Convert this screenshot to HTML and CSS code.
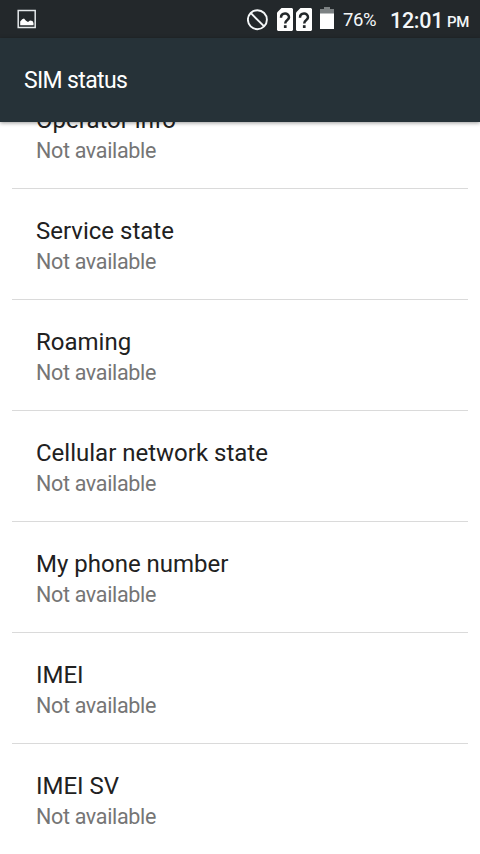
FILE: index.html
```html
<!DOCTYPE html>
<html lang="en">
<head>
<meta charset="utf-8">
<title>SIM status</title>
<link rel="stylesheet" href="styles.css">
</head>
<body>
<div class="statusbar">
  <svg class="picture" width="20" height="20" viewBox="0 0 20 20"><rect x="1.200" y="1.500" width="17" height="17" fill="none" stroke="#e4e8ea" stroke-width="1.5"/><path d="M3.200 16.300V12.500L5.200 10.200L7 9.600L9 11.800L11 13L13 11.500L15.500 12L16.500 14V16.300Z" fill="#fff"/></svg>
  <svg class="blocked" width="22" height="22" viewBox="0 0 22 22" fill="none" stroke="#f4f7f8" stroke-width="1.9"><circle cx="10.400" cy="10.700" r="9.500"/><path d="M3.900 4.200L16.900 17.200"/></svg>
  <svg class="sim" width="16" height="23" viewBox="0 0 16 23"><path d="M4.500 0H15L16 1V22L15 23H1L0 22V4.500Z" fill="#fff"/><path d="M4 9.800C4 4.300 12 4.300 12 9.300C12 12.200 8.200 11.700 8.200 15.500" fill="none" stroke="#23282b" stroke-width="2.500"/><rect x="6.900" y="17.200" width="2.700" height="2.800" fill="#23282b"/></svg>
  <svg class="sim" width="16" height="23" viewBox="0 0 16 23"><path d="M4.500 0H15L16 1V22L15 23H1L0 22V4.500Z" fill="#fff"/><path d="M4 9.800C4 4.300 12 4.300 12 9.300C12 12.200 8.200 11.700 8.200 15.500" fill="none" stroke="#23282b" stroke-width="2.500"/><rect x="6.900" y="17.200" width="2.700" height="2.800" fill="#23282b"/></svg>
  <svg class="battery" width="14" height="22" viewBox="0 0 14 22"><path d="M0 7V2H4V0H10V2H14V7Z" fill="#7c8183"/><path d="M0 6.500H14V22H0Z" fill="#fff"/></svg>
  <span class="percent">76%</span>
  <span class="clock">12:01</span>
  <span class="meridiem">PM</span>
</div>
<header class="appbar">SIM status</header>
<main class="content">
  <ul class="list">
    <li class="row"><div class="title">Operator info</div><div class="summary">Not available</div></li>
    <li class="row"><div class="title">Service state</div><div class="summary">Not available</div></li>
    <li class="row"><div class="title">Roaming</div><div class="summary">Not available</div></li>
    <li class="row"><div class="title">Cellular network state</div><div class="summary">Not available</div></li>
    <li class="row"><div class="title">My phone number</div><div class="summary">Not available</div></li>
    <li class="row"><div class="title">IMEI</div><div class="summary">Not available</div></li>
    <li class="row"><div class="title">IMEI SV</div><div class="summary">Not available</div></li>
  </ul>
</main>
</body>
</html>
```
FILE: styles.css
```css
* { box-sizing: border-box; }
body {
  margin: 0;
  height: 854px;
  display: flex;
  flex-direction: column;
  overflow: hidden;
  background: #fff;
  font-family: Roboto, "Liberation Sans", sans-serif;
}
.statusbar {
  flex: none;
  height: 38px;
  display: flex;
  align-items: center;
  background: #23282b;
  color: #f4f7f8;
  white-space: nowrap;
}
.statusbar svg { flex: none; display: block; }
.picture { margin-left: 17px; }
.blocked { margin-left: 210px; margin-top: 1px; }
.sim { margin-left: 8px; }
.sim + .sim { margin-left: 3px; }
.battery { margin-left: 8px; margin-top: -2px; }
.percent { width: 47px; margin-left: 9px; margin-top: 2px; font-size: 18.5px; letter-spacing: -.4px; }
.clock { width: 57px; margin-top: 2px; font-size: 21.5px; font-weight: 500; letter-spacing: -.3px; }
.meridiem { margin-top: 6px; font-size: 15px; font-weight: 500; letter-spacing: -.3px; }
.appbar {
  flex: none;
  position: relative;
  z-index: 1;
  height: 84px;
  padding: 1px 0 0 24px;
  line-height: 84px;
  background: #263238;
  color: #fff;
  font-size: 23px;
  letter-spacing: -.65px;
  box-shadow: 0 1px 4px rgba(0, 0, 0, .4);
}
.content { flex: 1; min-height: 0; overflow: hidden; }
.list { margin: -44px 12px 0; padding: 0; list-style: none; }
.row {
  height: 111px;
  padding: 27px 24px 0;
  border-bottom: 1px solid #dadada;
}
.row:last-child { border-bottom: 0; }
.title { font-size: 24px; line-height: 30px; color: #212121; }
.summary { font-size: 21.5px; line-height: 32px; letter-spacing: -.33px; color: #757575; }
```
